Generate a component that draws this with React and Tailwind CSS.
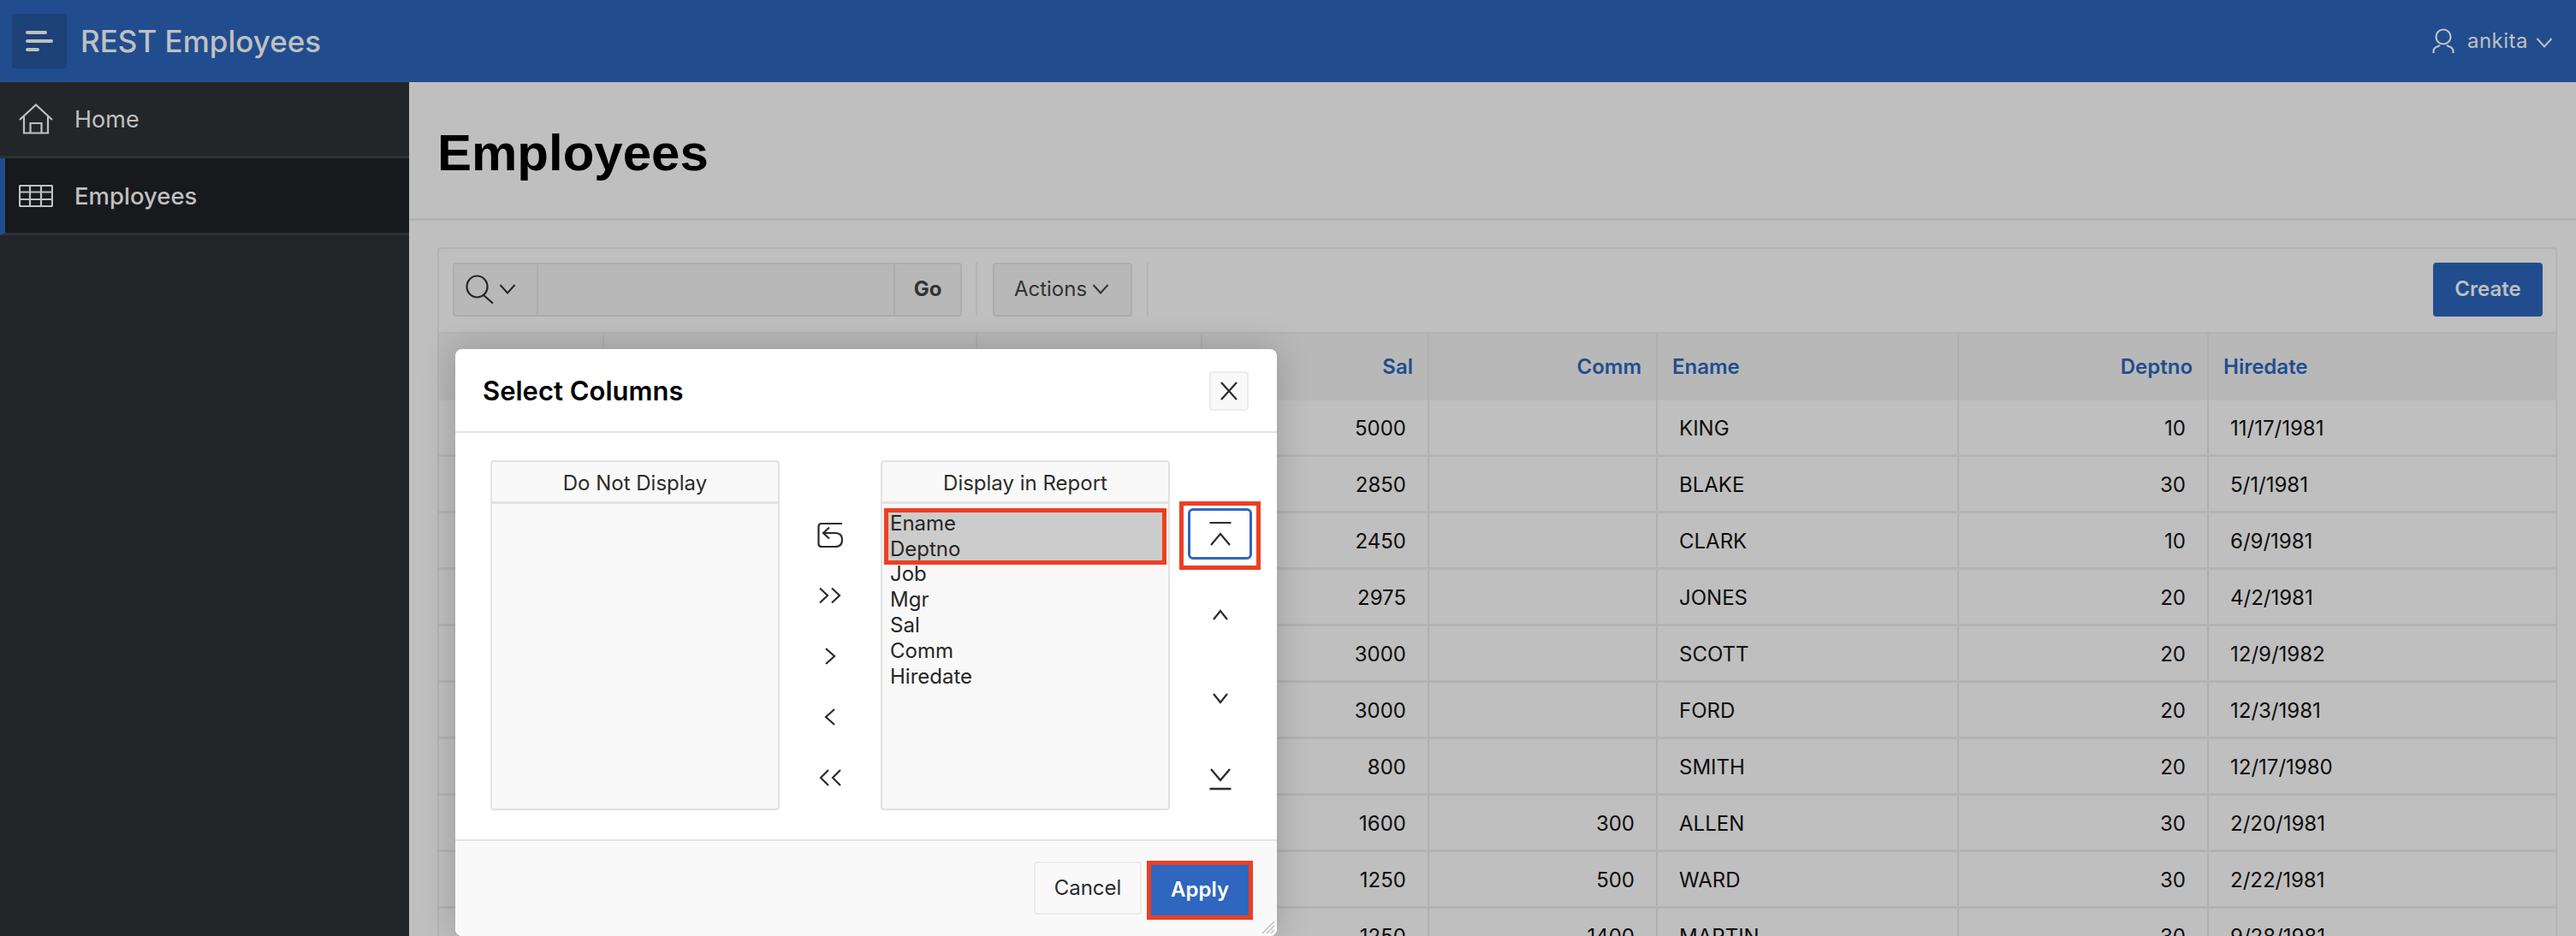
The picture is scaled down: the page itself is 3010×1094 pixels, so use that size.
const rows = [
  ["5000", "", "KING", "10", "11/17/1981"],
  ["2850", "", "BLAKE", "30", "5/1/1981"],
  ["2450", "", "CLARK", "10", "6/9/1981"],
  ["2975", "", "JONES", "20", "4/2/1981"],
  ["3000", "", "SCOTT", "20", "12/9/1982"],
  ["3000", "", "FORD", "20", "12/3/1981"],
  ["800", "", "SMITH", "20", "12/17/1980"],
  ["1600", "300", "ALLEN", "30", "2/20/1981"],
  ["1250", "500", "WARD", "30", "2/22/1981"],
  ["1250", "1400", "MARTIN", "30", "9/28/1981"],
];

const gridCols = "grid grid-cols-[193px_436px_263px_265px_267px_352px_292px_1fr]";
const cell = "border-r-2 border-[#b0b0b0]";

function Line({ d, w = 32, h = 32, sw = 2.2, className = "" }) {
  return (
    <svg width={w} height={h} viewBox={`0 0 ${w} ${h}`} fill="none" stroke="currentColor" strokeWidth={sw} className={`block ${className}`}>
      <path d={d} />
    </svg>
  );
}

function Caret({ className = "" }) {
  return <Line w={20} h={12} sw={2} d="M1.5 1 L10 10.5 L18.5 1" className={className} />;
}

function MiddleIcon({ d, w, h }) {
  return (
    <div className="flex h-[71px] items-center justify-center text-[#2b2b2b]">
      <Line d={d} w={w} h={h} />
    </div>
  );
}

function ListBox({ title, children }) {
  return (
    <div className="flex h-[409px] w-[338px] flex-col rounded border-2 border-[#e2e2e2] bg-[#f9f9f9]">
      <div className="flex h-[49px] items-center justify-center border-b-[3px] border-[#e2e2e2] pt-[3px] text-[24px] text-[#2b2b2b]">
        {title}
      </div>
      {children}
    </div>
  );
}

function Modal() {
  return (
    <div className="absolute left-[532px] top-[408px] flex h-[686px] w-[960px] flex-col rounded-lg bg-white shadow-[0_0_40px_rgba(0,0,0,0.2)]">
      <div className="flex h-[98px] items-center justify-between border-b-[2px] border-[#e4e4e4] pl-[32px] pr-[33px] pt-[2px]">
        <h2 className="text-[31px] font-semibold text-black">Select Columns</h2>
        <div className="flex h-[46px] w-[46px] items-center justify-center rounded border-2 border-[#ececec] bg-[#f9f9f9] text-[#2b2b2b]">
          <Line d="M2 1 L20 21 M20 1 L2 21" w={22} h={22} />
        </div>
      </div>

      <div className="flex flex-1 pl-[41px] pt-[32px]">
        <ListBox title="Do Not Display" />

        <div className="flex w-[118px] flex-col pt-[51px]">
          <MiddleIcon w={30} h={30} d="M29 2 H5 Q1.5 2 1.5 5.5 V25.5 Q1.5 29 5 29 H21 Q29 29 29 21 Q29 13 21 13 H7 M14 6.5 L7 13 L14 19.5" />
          <MiddleIcon w={28} h={20} d="M2 1.5 L11 10 L2 18.5 M16 1.5 L25 10 L16 18.5" />
          <MiddleIcon w={14} h={20} d="M2 1 L12 10 L2 19" />
          <MiddleIcon w={14} h={20} d="M12 1 L2 10 L12 19" />
          <MiddleIcon w={28} h={20} d="M12 1 L3 10 L12 19 M26 1 L17 10 L26 19" />
        </div>

        <ListBox title="Display in Report">
          <div className="flex flex-col px-[2px] pt-[5px] text-[24px] leading-[30px] text-[#262626]">
            <div className="flex h-[66px] flex-col justify-center border-[5px] border-[#ec3f22] bg-[#cccccc] pl-[2px]">
              <div className="h-[30px] shrink-0">Ename</div>
              <div className="h-[30px] shrink-0">Deptno</div>
            </div>
            <div className="-mt-[4px]">
              {["Job", "Mgr", "Sal", "Comm", "Hiredate"].map((item) => (
                <div key={item} className="pl-[7px]">{item}</div>
              ))}
            </div>
          </div>
        </ListBox>

        <div className="flex w-[106px] flex-col items-center pl-[11px] pt-[48px] text-[#2b2b2b]">
          <div className="border-[5px] border-[#ec3f22] px-[5px] pb-[7px] pt-[3px]">
            <div className="flex h-[60px] w-[75px] items-center justify-center rounded-md border-[3px] border-[#2f66bf]">
              <Line w={26} h={30} d="M0.5 2 H25.5 M2 28 L13 15 L24 28" />
            </div>
          </div>
          <Line w={20} h={13} d="M2 12 L10 2 L18 12" className="mt-[46px]" />
          <Line w={20} h={13} d="M2 1 L10 11 L18 1" className="mt-[85px]" />
          <Line w={26} h={26} d="M2 1 L13 14 L24 1 M0.5 24 H25.5" sw={2.4} className="mt-[75px]" />
        </div>
      </div>

      <div className="relative flex h-[113px] items-start justify-end gap-[6px] rounded-b-lg border-t-[2px] border-[#e4e4e4] bg-[#f9f9f9] pr-[28px] pt-[24px]">
        <div className="flex h-[62px] w-[126px] items-center justify-center rounded border-2 border-[#ececec] bg-[#f9f9f9] text-[24px] text-[#2b2b2b]">
          Cancel
        </div>
        <div className="-mt-[1px] flex h-[69px] w-[124px] items-center justify-center border-[5px] border-[#ec3f22] bg-[#2f66bf] pb-[2px] text-[24px] font-semibold text-white">
          Apply
        </div>
        <svg width="16" height="16" viewBox="0 0 16 16" stroke="#c4c4c4" strokeWidth="1.5" className="absolute bottom-[2px] right-[2px]">
          <path d="M15 1 L1 15 M15 6 L6 15 M15 11 L11 15" />
        </svg>
      </div>
    </div>
  );
}

function ReportPanel() {
  return (
    <div className="rounded-sm border-2 border-[#b3b3b3] bg-[#bfbfbf]">
      <div className="flex h-[97px] items-center justify-between pb-[3px] pl-[16px] pr-[15px]">
        <div className="flex items-center">
          <div className="flex h-[63px] w-[595px] rounded border-2 border-[#adadad] bg-[#b8b8b8]">
            <div className="flex w-[98px] items-center gap-[5px] border-r-2 border-[#adadad] pl-[13px] text-[#262626]">
              <svg width="34" height="34" viewBox="0 0 34 34" fill="none" stroke="currentColor" strokeWidth="2.2" className="block">
                <ellipse cx="13.5" cy="14" rx="12" ry="12.5" />
                <path d="M21 24 L32 33.5" />
              </svg>
              <Caret />
            </div>
            <div className="flex-1" />
            <div className="flex w-[78px] items-center justify-center border-l-2 border-[#adadad] text-[24px] font-bold text-[#333333]">
              Go
            </div>
          </div>
          <div className="ml-[16px] h-[62px] border-l-2 border-[#b3b3b3]" />
          <div className="ml-[18px] flex h-[63px] w-[163px] items-center justify-center gap-[6px] rounded border-2 border-[#adadad] bg-[#b8b8b8] pr-[2px] text-[24px] text-[#333333]">
            Actions
            <Caret />
          </div>
          <div className="ml-[17px] h-[62px] border-l-2 border-[#b3b3b3]" />
        </div>
        <div className="flex h-[63px] w-[128px] items-center justify-center rounded bg-[#214d8f] text-[24px] font-semibold text-[#bfbfbf]">
          Create
        </div>
      </div>

      <div className={`${gridCols} h-[80px] border-t-2 border-[#b3b3b3] bg-[#b8b8b8] text-[24px] font-semibold text-[#214d8f]`}>
        <div className={cell} />
        <div className={cell} />
        <div className={cell} />
        <div className={`${cell} flex items-center justify-end pr-[17px]`}>Sal</div>
        <div className={`${cell} flex items-center justify-end pr-[17px]`}>Comm</div>
        <div className={`${cell} flex items-center pl-[17px]`}>Ename</div>
        <div className={`${cell} flex items-center justify-end pr-[17px]`}>Deptno</div>
        <div className="flex items-center pl-[17px]">Hiredate</div>
      </div>

      {rows.map((r) => (
        <div key={r[2] + r[4]} className={`${gridCols} h-[66px] border-b-[3px] border-[#b3b3b3] text-[24px] text-[#0d0d0d]`}>
          <div className={cell} />
          <div className={cell} />
          <div className={cell} />
          <div className={`${cell} flex items-center justify-end pr-[25px] pt-[2px]`}>{r[0]}</div>
          <div className={`${cell} flex items-center justify-end pr-[25px] pt-[2px]`}>{r[1]}</div>
          <div className={`${cell} flex items-center pl-[25px] pt-[2px]`}>{r[2]}</div>
          <div className={`${cell} flex items-center justify-end pr-[25px] pt-[2px]`}>{r[3]}</div>
          <div className="flex items-center pl-[25px] pt-[2px]">{r[4]}</div>
        </div>
      ))}
    </div>
  );
}

export default function App() {
  return (
    <div className="relative h-[1094px] w-[3010px] overflow-hidden bg-[#bfbfbf] font-['Inter',sans-serif]">
      <header className="flex h-[96px] items-center justify-between bg-[#214d8f] pl-[14px] pr-[27px] text-[#c0c0c0]">
        <div className="flex items-center">
          <div className="flex h-[64px] w-[64px] items-center justify-center rounded bg-[#1c4278]">
            <svg width="32" height="24" viewBox="0 0 32 24" fill="currentColor">
              <rect x="0" y="0" width="25" height="4" rx="2" />
              <rect x="0" y="10" width="32" height="4" rx="2" />
              <rect x="0" y="20" width="16" height="4" rx="2" />
            </svg>
          </div>
          <span className="ml-[16px] text-[35px] font-medium">REST Employees</span>
        </div>
        <div className="flex items-center">
          <svg width="26" height="30" viewBox="0 0 26 30" fill="none" stroke="currentColor" strokeWidth="2.2" className="block">
            <circle cx="13" cy="10" r="8.5" />
            <path d="M1.5 29 V27 Q1.5 23 6 21.5 L9 20 M24.5 29 V27 Q24.5 23 20 21.5 L17 20" />
          </svg>
          <span className="ml-[15px] text-[24px] tracking-[0.5px]">ankita</span>
          <Caret className="ml-[9px] mt-[3px]" />
        </div>
      </header>

      <div className="flex h-[998px]">
        <aside className="w-[478px] bg-[#232629] text-[#c0c0c0]">
          <div className="flex h-[89px] items-center border-b-[3px] border-[#2d3136] pl-[22px]">
            <svg width="40" height="36" viewBox="0 0 40 36" fill="none" stroke="currentColor" strokeWidth="2.2" className="block">
              <path d="M1 19 L20 1.5 L39 19 M6 15 V34.5 H34 V15 M13.5 34.5 V23 H26.5 V34.5" />
            </svg>
            <span className="ml-[25px] pt-[3px] text-[27px]">Home</span>
          </div>
          <div className="flex h-[90px] items-center border-b-[3px] border-l-[6px] border-[#2d3136] border-l-[#214d8f] bg-[#17191d] pl-[16px]">
            <svg width="40" height="26" viewBox="0 0 40 26" fill="none" stroke="currentColor" strokeWidth="2.2" className="block">
              <rect x="1" y="1" width="38" height="24" rx="1" />
              <path d="M1 8.5 H39 M1 17 H39 M13 1 V25 M26 1 V25" />
            </svg>
            <span className="ml-[25px] pt-[3px] text-[27.5px] font-medium">Employees</span>
          </div>
        </aside>

        <main className="flex-1">
          <div className="flex h-[162px] items-center border-b-[3px] border-[#b3b3b3] pl-[33px] pt-[6px]">
            <h1 className="font-['Liberation_Sans',sans-serif] text-[60px] font-bold leading-none text-black">Employees</h1>
          </div>
          <div className="pl-[33px] pr-[22px] pt-[31px]">
            <ReportPanel />
          </div>
        </main>
      </div>

      <Modal />
    </div>
  );
}
